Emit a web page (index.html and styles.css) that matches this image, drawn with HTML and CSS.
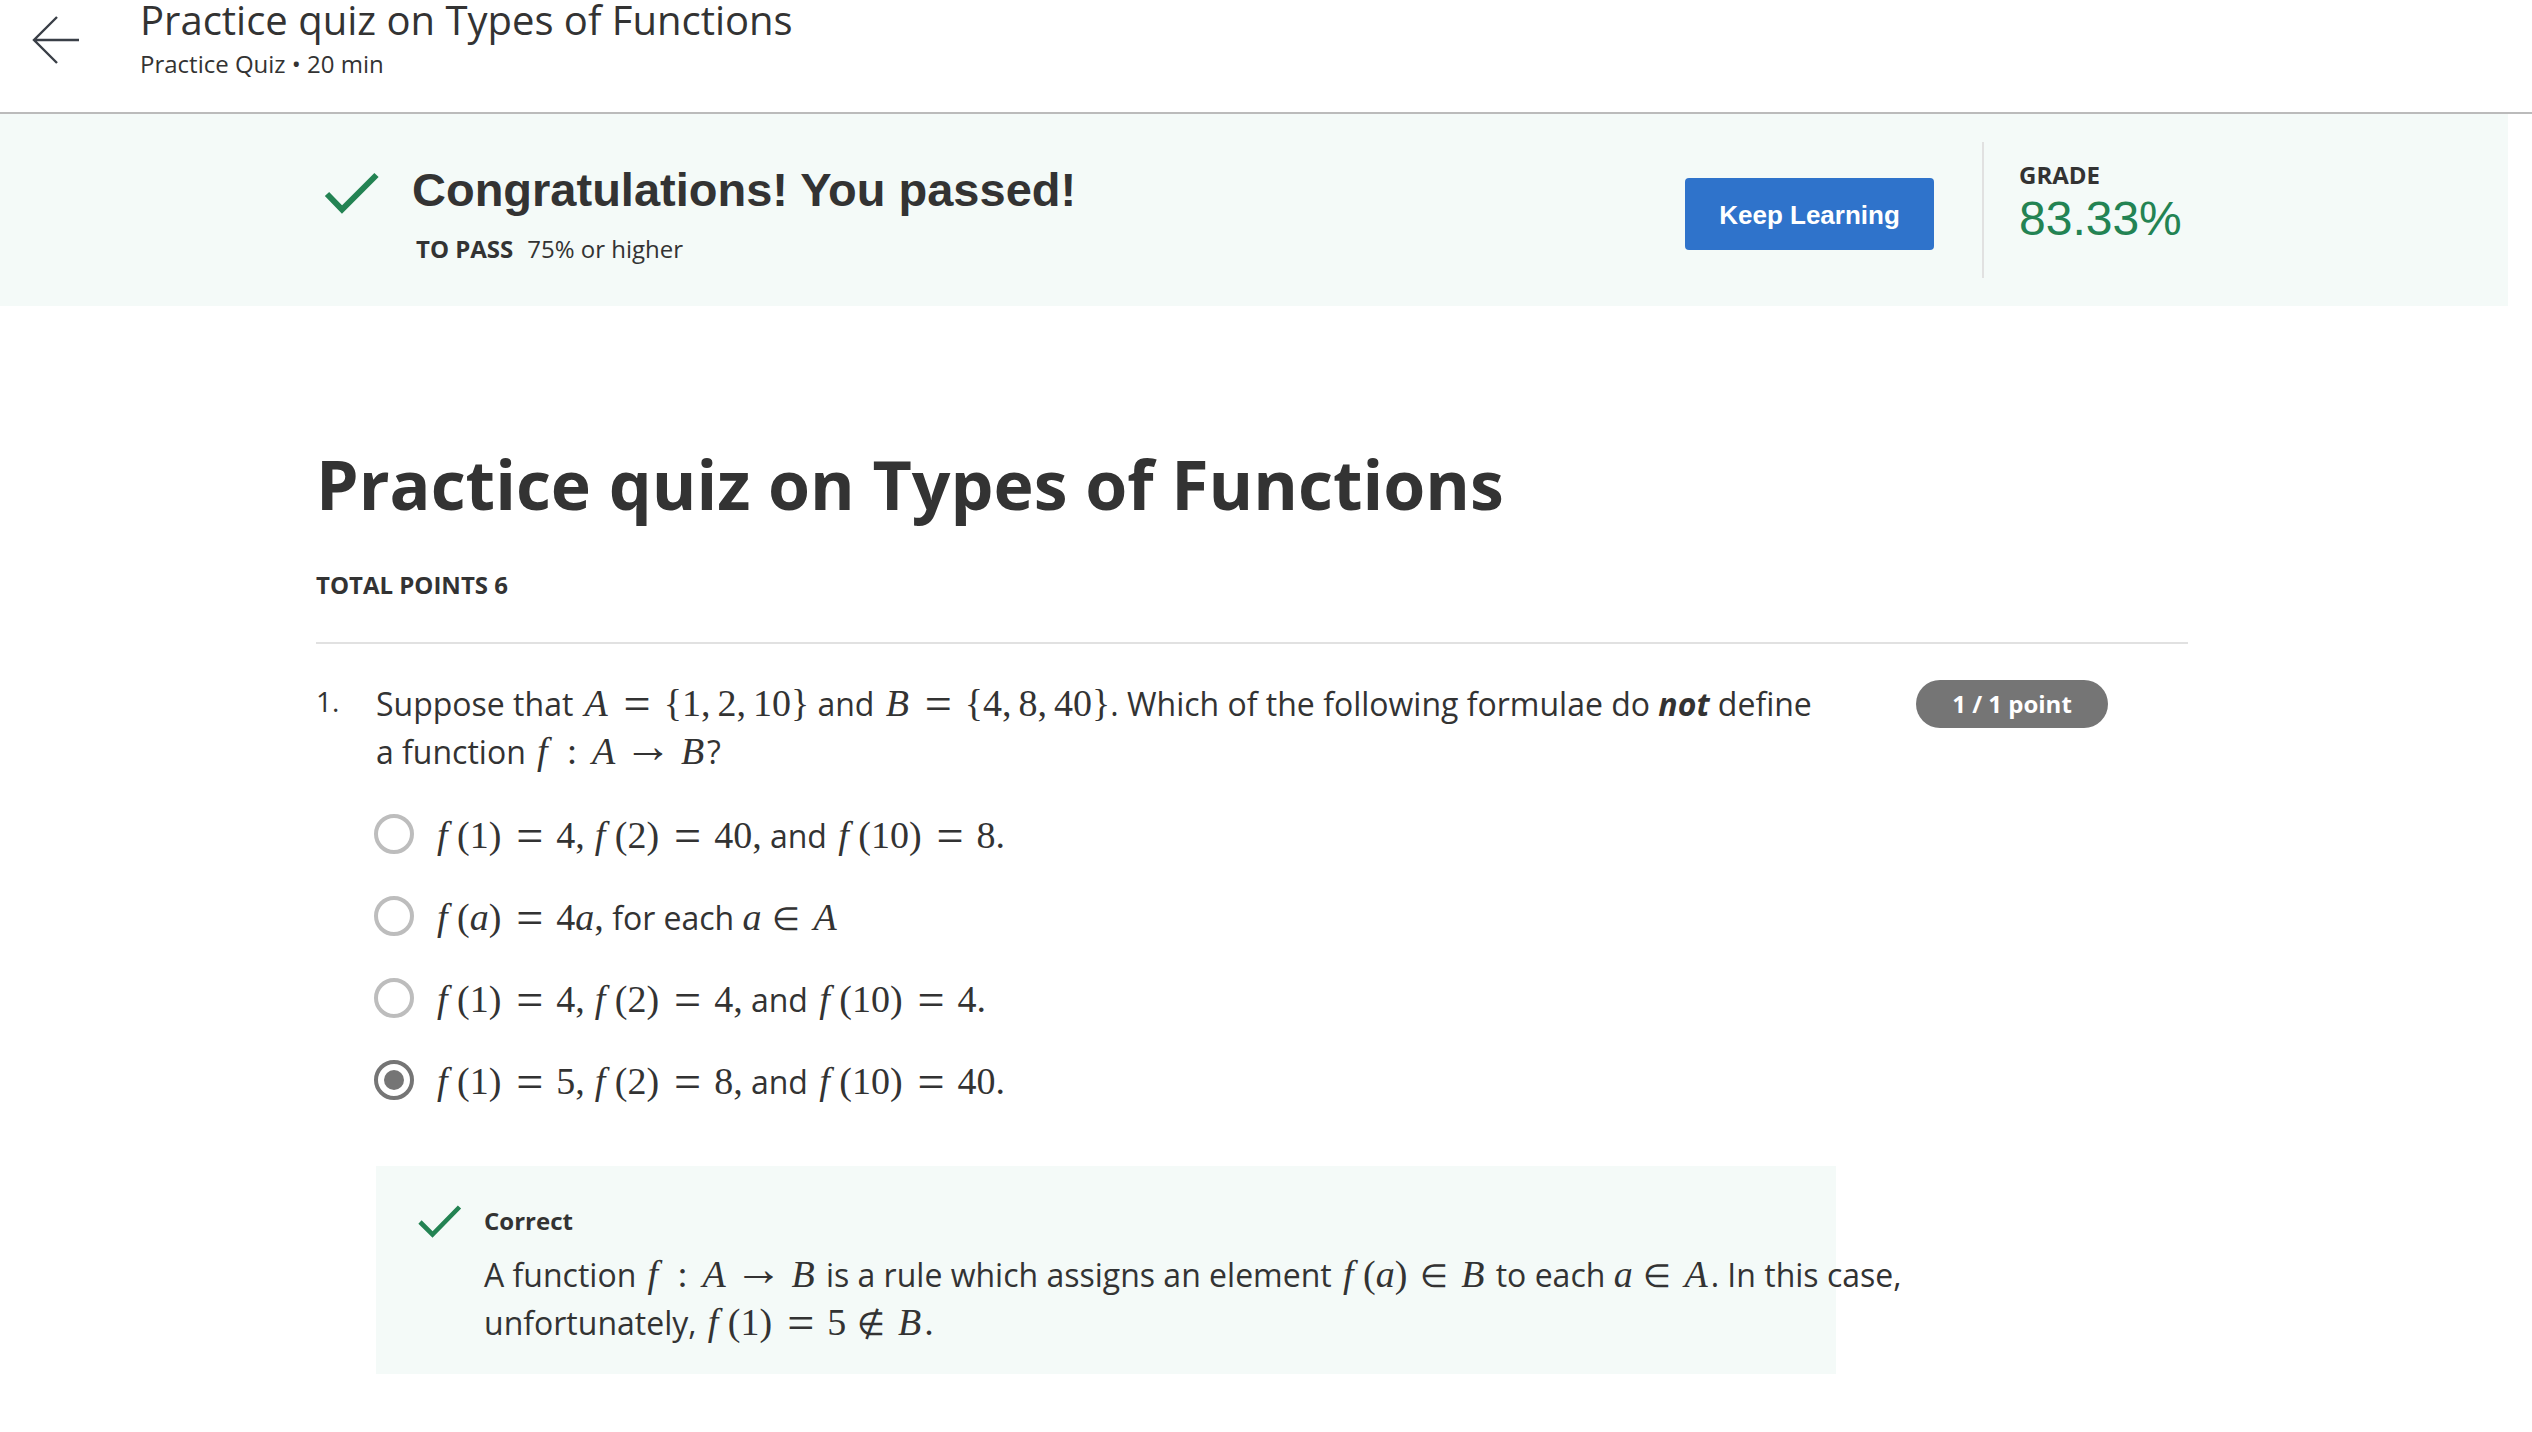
FILE: index.html
```html
<!DOCTYPE html>
<html lang="en">
<head>
<meta charset="utf-8">
<meta name="viewport" content="width=device-width, initial-scale=1">
<title>Practice quiz on Types of Functions</title>
<link rel="stylesheet" href="styles.css">
</head>
<body>
<header class="topbar">
  <a class="back" href="#" aria-label="Back">
    <svg width="48" height="48" viewBox="0 0 48 48" fill="none" stroke="#3a3f47" stroke-width="2.4"><path d="M25 1 2 24l23 23M2 24h45"/></svg>
  </a>
  <div>
    <p class="topbar-title">Practice quiz on Types of Functions</p>
    <p class="topbar-meta">Practice Quiz • 20 min</p>
  </div>
</header>
<div class="page">
  <section class="banner">
    <div class="container banner-row">
      <svg class="banner-check" width="56" height="44" viewBox="0 0 56 44" fill="none" stroke="#238353" stroke-width="6"><path d="M3 22 18 37.500 52.500 3"/></svg>
      <div class="banner-text">
        <h2 class="banner-heading">Congratulations! You passed!</h2>
        <p class="banner-pass"><strong>TO PASS</strong><span>75% or higher</span></p>
      </div>
      <button class="keep" type="button">Keep Learning</button>
      <div class="grade">
        <p class="grade-label">GRADE</p>
        <p class="grade-value">83.33%</p>
      </div>
    </div>
  </section>
  <main class="container">
    <h1 class="quiz-title">Practice quiz on Types of Functions</h1>
    <p class="total">TOTAL POINTS 6</p>
    <section class="question">
      <span class="number">1.</span>
      <div>
        <p class="text prompt" id="q1">Suppose that <span class="math"><i class="cap">A</i><span class="eq">=</span>{1<span class="comma">,</span>2<span class="comma">,</span>10}</span> and <span class="math"><i class="cap">B</i><span class="eq">=</span>{4<span class="comma">,</span>8<span class="comma">,</span>40}</span>. Which of the following formulae do <strong><em>not</em></strong> define a function <span class="math"><i class="fn">f</i><span class="colon">:</span><i class="cap">A</i><span class="arrow">→</span><i class="cap">B</i></span>?</p>
        <div class="options" role="radiogroup" aria-labelledby="q1">
          <label class="option text"><input type="radio" name="q1"><span><span class="math"><i class="fn">f</i><span class="arg">(1)</span><span class="eq">=</span>4<span class="comma">,</span><i class="fn">f</i><span class="arg">(2)</span><span class="eq">=</span>40,</span> and <span class="math"><i class="fn">f</i><span class="arg">(10)</span><span class="eq">=</span>8.</span></span></label>
          <label class="option text"><input type="radio" name="q1"><span><span class="math"><i class="fn">f</i><span class="arg">(<i>a</i>)</span><span class="eq">=</span>4<i>a</i>,</span> for each <span class="math"><i>a</i><span class="in">∈</span><i class="cap">A</i></span></span></label>
          <label class="option text"><input type="radio" name="q1"><span><span class="math"><i class="fn">f</i><span class="arg">(1)</span><span class="eq">=</span>4<span class="comma">,</span><i class="fn">f</i><span class="arg">(2)</span><span class="eq">=</span>4,</span> and <span class="math"><i class="fn">f</i><span class="arg">(10)</span><span class="eq">=</span>4.</span></span></label>
          <label class="option text"><input type="radio" name="q1" checked><span><span class="math"><i class="fn">f</i><span class="arg">(1)</span><span class="eq">=</span>5<span class="comma">,</span><i class="fn">f</i><span class="arg">(2)</span><span class="eq">=</span>8,</span> and <span class="math"><i class="fn">f</i><span class="arg">(10)</span><span class="eq">=</span>40.</span></span></label>
        </div>
        <div class="feedback">
          <svg class="feedback-check" width="44" height="34" viewBox="0 0 44 34" fill="none" stroke="#238353" stroke-width="4.600"><path d="M2 17 14.500 29.500 41.500 2"/></svg>
          <div class="feedback-body">
            <p class="feedback-title">Correct</p>
            <p class="text">A function <span class="math"><i class="fn">f</i><span class="colon">:</span><i class="cap">A</i><span class="arrow">→</span><i class="cap">B</i></span> is a rule which assigns an element <span class="math"><i class="fn">f</i><span class="arg">(<i>a</i>)</span><span class="in">∈</span><i class="cap">B</i></span> to each <span class="math"><i>a</i><span class="in">∈</span><i class="cap">A</i></span>. In this case, unfortunately, <span class="math"><i class="fn">f</i><span class="arg">(1)</span><span class="eq">=</span>5<span class="in">∉</span><i class="cap">B</i>.</span></p>
          </div>
        </div>
      </div>
      <span class="points">1 / 1 point</span>
    </section>
  </main>
</div>
</body>
</html>
```
FILE: styles.css
```css
* { box-sizing: border-box; }

body {
  margin: 0;
  background: #fff;
  color: #333;
  font-family: "Open Sans", sans-serif;
  font-size: 24px;
  line-height: 36px;
}

h1, h2, p { margin: 0; }

.topbar {
  display: flex;
  gap: 60px;
  padding: 0 32px 32px;
  border-bottom: 2px solid #bbb;
}

.back { padding-top: 16px; }
.back svg, .banner-check, .feedback-check { display: block; flex: none; }

.topbar-title { font-size: 40px; line-height: 40px; }
.topbar-meta { margin-top: 8px; line-height: 32px; }

.page { margin-right: 24px; }

.container {
  max-width: 1876px;
  margin: 0 auto;
  padding-right: 4px;
}

.banner { padding: 28px 0; background: #f4faf8; }

.banner-row {
  display: flex;
  align-items: flex-start;
  padding-left: 8px;
}

.banner-check { margin: 30px 32px 0 0; }
.banner-text { flex: 1; padding-top: 20px; }

.banner-heading {
  font: bold 47px/56px "Liberation Sans", Arial, sans-serif;
}

.banner-pass {
  display: flex;
  gap: 14px;
  margin-top: 13px;
  padding-left: 4px;
}

.keep {
  width: 249px;
  height: 72px;
  margin: 36px 48px 0 0;
  padding: 2px 0 0;
  border: 0;
  border-radius: 4px;
  background: #2f73cb;
  color: #fff;
  font: bold 26px/36px "Liberation Sans", Arial, sans-serif;
}

.grade {
  width: 206px;
  height: 136px;
  padding: 17px 0 0 35px;
  border-left: 2px solid #e1e1e1;
}

.grade-label { font-weight: bold; line-height: 32px; }

.grade-value {
  color: #238353;
  font: 48px/56px "Liberation Sans", Arial, sans-serif;
}

.quiz-title { padding-top: 138px; font-size: 68px; line-height: 80px; }

.total {
  margin-top: 43px;
  padding-bottom: 39px;
  border-bottom: 2px solid #e1e1e1;
  font-weight: bold;
}

.question {
  display: grid;
  grid-template-columns: 60px minmax(0, 1460px) 192px;
  padding-top: 36px;
}

.number { font-size: 28px; line-height: 42px; }

.points {
  margin-left: 80px;
  width: 192px;
  height: 48px;
  border-radius: 24px;
  background: #757575;
  color: #fff;
  font-weight: bold;
  line-height: 48px;
  text-align: center;
}

.text { font-size: 32px; line-height: 48px; }
.prompt { padding-right: 12px; }

.math {
  font-family: "Liberation Serif", "Times New Roman", serif;
  font-size: 38px;
  line-height: 36px;
  white-space: nowrap;
}

.cap, .fn, .eq, .in, .arrow, .colon {
  display: inline-block;
  text-align: center;
}

.cap { width: 29px; }
.fn { width: 21px; padding-left: 3px; text-align: left; }
.arg { padding: 0 2px; }
.eq { width: 53px; font-size: 48px; vertical-align: -4px; }
.in { width: 49px; font-size: 32px; }
.arrow { width: 60px; font-size: 48px; vertical-align: 2px; }
.colon { width: 34px; }
.comma { margin-right: 7px; }

.options {
  display: grid;
  gap: 34px;
  margin: 36px 0 60px -2px;
}

.option { display: flex; gap: 20px; }

.option input {
  appearance: none;
  display: grid;
  place-items: center;
  flex: none;
  width: 40px;
  height: 40px;
  margin: 2px 0 0;
  border: 4px solid #bdbdbd;
  border-radius: 50%;
}

.option input:checked { border-color: #757575; }

.option input:checked::before {
  content: "";
  width: 20px;
  height: 20px;
  border-radius: 50%;
  background: #757575;
}

.feedback {
  display: flex;
  gap: 22px;
  padding: 37px 0 27px 42px;
  background: #f4faf8;
}

.feedback-check { margin-top: 2px; }
.feedback-body { flex: none; width: 1424px; }
.feedback-title { margin-bottom: 12px; font-weight: bold; }
```
